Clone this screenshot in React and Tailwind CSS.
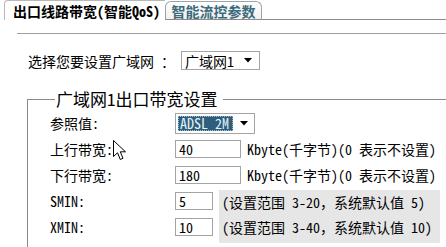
import React from "react";

const FONT = { fontFamily: '"Noto Sans Mono CJK SC", "Noto Sans CJK SC", sans-serif' };

function Arrow() {
  return (
    <svg width="8" height="5" viewBox="0 0 8 5" className="shrink-0">
      <path d="M0 0 L8 0 L4 4.5 Z" fill="#000" />
    </svg>
  );
}

function Input({ value, w }) {
  return (
    <div className={`${w} h-[18px] border border-[#a4a4a4] bg-white flex items-center pl-[3px] text-[14px] leading-none text-black`}>
      {value}
    </div>
  );
}

export default function App() {
  return (
    <div className="relative w-[446px] h-[247px] overflow-hidden bg-white text-black" style={FONT}>
      {/* tabs */}
      <div className="flex h-[20px] items-stretch">
        <div className="w-[4px]" />
        <div className="w-[161px] border-l border-t border-[#b8b8b8] rounded-tl-[4px] flex items-center pl-[8px] font-bold text-[14px] leading-none">
          出口线路带宽(智能QoS)
        </div>
        <div className="w-[97px] mt-[1px] border-l border-r border-t border-b border-[#9aa6aa] border-b-[#8c8c8c] rounded-t-[6px] bg-gradient-to-b from-white to-[#f0f0f0] flex items-center justify-center font-bold text-[14px] leading-none text-[#3b6b7d]">
          智能流控参数
        </div>
        <div className="flex-1 border-b border-[#8c8c8c]" />
      </div>

      <div className="ml-[17px] mt-[13px] h-0 border-t border-[#a0a0a0]" />

      {/* WAN select */}
      <div className="mt-[17px] flex items-center h-[19px]">
        <div className="ml-[28px] w-[153px] text-[14px] leading-none">选择您要设置广域网 ：</div>
        <div className="w-[79px] h-[19px] border border-[#a4a4a4] flex items-center justify-between pl-[3px] pr-[7px] text-[14px] leading-none">
          <span>广域网1</span>
          <Arrow />
        </div>
      </div>

      {/* fieldset */}
      <fieldset className="mt-[19px] ml-[27px] w-[500px] h-[200px] border-l border-t border-[#8a8a8a]">
        <legend className="ml-[27px] pl-[1px] pr-[5px] text-[17px] leading-[20px]">广域网1出口带宽设置</legend>
        <div className="pt-[1px] text-[14px] leading-none">
          <div className="flex items-center h-[26px]">
            <div className="pl-[22px] w-[147px]">参照值:</div>
            <div className="w-[80px] h-[21px] border border-[#a4a4a4] flex items-center justify-between pl-[2px] pr-[6px]">
              <div className="h-[15px] w-[55px] bg-[#2d5e7b] border border-dotted border-[#9fc3d6] text-[#e8f2f7] flex items-center pl-[1px]">
                ADSL 2M
              </div>
              <Arrow />
            </div>
          </div>
          <div className="flex items-center h-[26px]">
            <div className="pl-[22px] w-[147px]">上行带宽:</div>
            <Input value="40" w="w-[66px]" />
            <div className="ml-[6px] whitespace-nowrap">Kbyte(千字节)(0 表示不设置)</div>
          </div>
          <div className="flex items-center h-[26px]">
            <div className="pl-[22px] w-[147px]">下行带宽:</div>
            <Input value="180" w="w-[66px]" />
            <div className="ml-[6px] whitespace-nowrap">Kbyte(千字节)(0 表示不设置)</div>
          </div>
          <div className="flex">
            <div className="w-[191px]">
              <div className="flex items-center h-[26px]">
                <div className="pl-[22px] w-[147px]">SMIN:</div>
                <Input value="5" w="w-[38px]" />
              </div>
              <div className="flex items-center h-[26px]">
                <div className="pl-[22px] w-[147px]">XMIN:</div>
                <Input value="10" w="w-[38px]" />
              </div>
            </div>
            <div className="mt-[2px] w-[221px] h-[53px] bg-[#e6e6e6] pl-[3px]">
              <div className="h-[24px] flex items-center whitespace-nowrap">(设置范围 3-20，系统默认值 5)</div>
              <div className="h-[26px] flex items-center whitespace-nowrap">(设置范围 3-40，系统默认值 10)</div>
            </div>
          </div>
        </div>
      </fieldset>

      {/* mouse cursor overlay */}
      <svg className="absolute left-[113px] top-[140px]" width="14" height="21" viewBox="0 0 14 21">
        <path d="M0.5 0.5 L0.5 16.5 L4.5 12.8 L7.3 19.5 L10 18.3 L7.3 11.8 L12.5 11.8 Z" fill="#fff" stroke="#000" strokeWidth="1" />
      </svg>
    </div>
  );
}
